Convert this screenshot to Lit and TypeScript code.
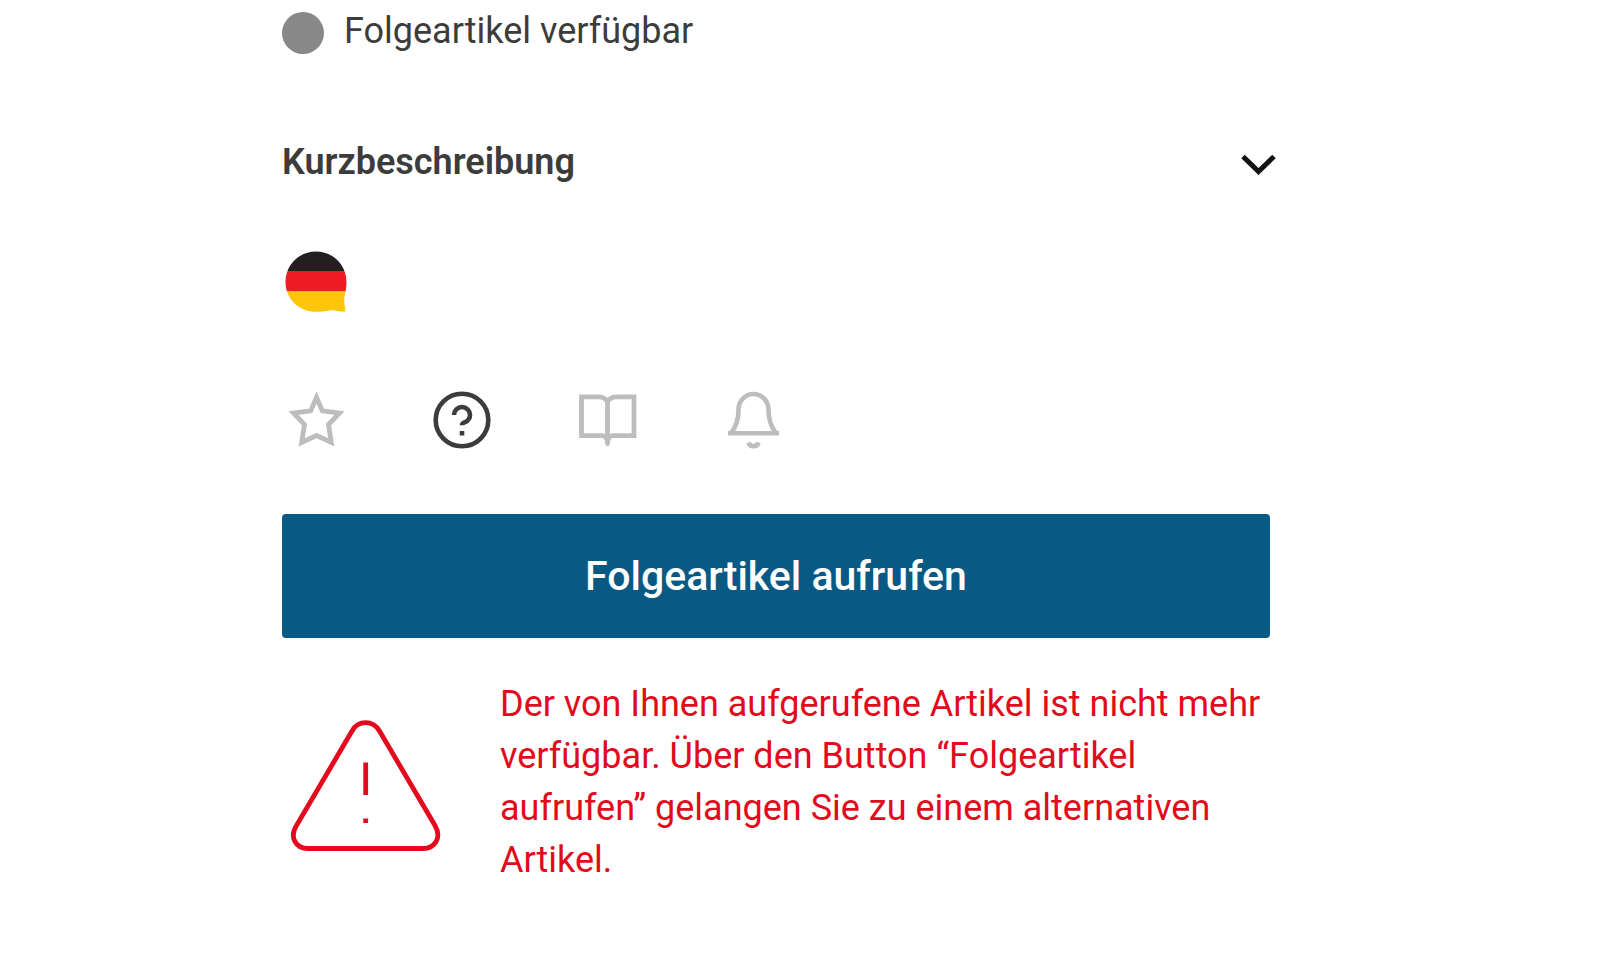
import { LitElement, html, css } from "lit";
import { customElement, state } from "lit/decorators.js";

@customElement("app-root")
export class AppRoot extends LitElement {
  @state() private open = false;

  static styles = css`
    :host {
      display: grid;
      grid-template-columns: 282fr 988fr 330fr;
      min-height: 100vh;
      background: #fff;
      color: #3c3c3b;
      font-family: Roboto, "Liberation Sans", sans-serif;
      font-size: 36px;
      line-height: 52px;
    }
    * {
      box-sizing: border-box;
    }
    svg {
      display: block;
      flex: none;
    }
    button {
      font: inherit;
      color: inherit;
      background: none;
      border: 0;
      padding: 0;
      margin: 0;
      cursor: pointer;
    }
    .article {
      grid-column: 2;
      min-width: 0;
      padding-top: 5px;
    }
    .availability {
      display: flex;
      gap: 20px;
      align-items: center;
      margin: 0;
    }
    .dot {
      flex: none;
      width: 42px;
      height: 42px;
      margin-top: 4px;
      border-radius: 50%;
      background: #888;
    }
    .heading {
      margin: 79px -6px 0 0;
      font-size: inherit;
      font-weight: 600;
    }
    .toggle {
      display: flex;
      justify-content: space-between;
      align-items: center;
      width: 100%;
      text-align: left;
    }
    .chevron {
      margin-top: 6px;
    }
    .language {
      display: block;
      margin-top: 60px;
    }
    .actions {
      display: flex;
      gap: 78px;
      margin-top: 70px;
    }
    .action {
      color: #bdbdbd;
    }
    .action.active {
      color: #3c3c3b;
    }
    .primary {
      display: block;
      width: 100%;
      margin-top: 60px;
      padding: 36px 20px;
      border-radius: 4px;
      background: #085a84;
      color: #fff;
      font-size: 41px;
      font-weight: 500;
    }
    .notice {
      display: flex;
      align-items: center;
      gap: 50px;
      margin-top: 40px;
      color: #e20a1c;
    }
    .notice p {
      margin: 0;
    }
  `;

  render() {
    return html`
      <main class="article">
        <p class="availability"><span class="dot"></span>Folgeartikel verfügbar</p>

        <h2 class="heading">
          <button
            class="toggle"
            aria-expanded=${this.open ? "true" : "false"}
            @click=${() => (this.open = !this.open)}
          >
            Kurzbeschreibung
            <svg class="chevron" width="36" height="24" viewBox="0 0 36 24" fill="none" stroke="#111" stroke-width="5" aria-hidden="true">
              <path d="M3 3.500 18.500 18.500 34 3.500" />
            </svg>
          </button>
        </h2>

        <button class="language" aria-label="Deutsch">
          <svg width="68" height="68" viewBox="0 0 68 68" aria-hidden="true">
            <defs>
              <clipPath id="bubble">
                <path d="M34 3.500C51 3.500 64.500 17 64.500 34C64.500 41 62.800 46 62.300 50C62.300 55 62.800 59 63.500 63.500C59 63.800 54 62.800 50 62C45 63 40 63.800 34 63.800C17 63.800 3.500 51 3.500 34C3.500 17 17 3.500 34 3.500Z" />
              </clipPath>
            </defs>
            <g clip-path="url(#bubble)">
              <path fill="#231f20" d="M0 0H68V23H0Z" />
              <path fill="#ed1c24" d="M0 23H68V43.500H0Z" />
              <path fill="#fdc60b" d="M0 43.500H68V68H0Z" />
            </g>
          </svg>
        </button>

        <div class="actions">
          <button class="action" aria-label="Merken">
            <svg width="68" height="68" viewBox="0 0 68 68" fill="none" stroke="currentColor" stroke-width="4.800" aria-hidden="true">
              <path d="M34.500 11.500 40.300 24.800 57.500 27 46.500 38.500 49.300 56.500 34.500 49.500 19.700 56.500 22.500 38.500 11.500 27 28.700 24.800Z" />
            </svg>
          </button>
          <button class="action active" aria-label="Frage stellen">
            <svg width="68" height="68" viewBox="0 0 68 68" fill="none" stroke="currentColor" stroke-width="4.600" aria-hidden="true">
              <circle cx="34" cy="34" r="26.300" />
              <path d="M26 29A8 8 0 0 1 42 29C42 33 39.500 35 37 36.200C35 37 34 37.500 34 39.300M34 45V49.600" />
            </svg>
          </button>
          <button class="action" aria-label="Katalog">
            <svg width="68" height="68" viewBox="0 0 68 68" fill="none" stroke="currentColor" stroke-width="4.800" aria-hidden="true">
              <path d="M33.500 58V16C32 13 29 10.800 25 10.800H7.500V49.600H28C31 49.600 33 52 33.500 55C34 52 36 49.600 39 49.600H60V10.800H42C38 10.800 35 13 33.500 16" />
              <path fill="currentColor" stroke="none" d="M29 50H38C36 53 36 56 35 60H32C31 56 31 53 29 50Z" />
            </svg>
          </button>
          <button class="action" aria-label="Benachrichtigen">
            <svg width="68" height="68" viewBox="0 0 68 68" fill="none" stroke="currentColor" stroke-width="4.600" aria-hidden="true">
              <path d="M11 47.300C16 41 18.500 34 18.500 23.500A15 15.500 0 0 1 48.500 23.500C48.500 34 51 41 56 47.300M8 47.300H59M28.500 56.500C30 61.300 37 61.300 38.500 56.500" />
            </svg>
          </button>
        </div>

        <button class="primary">Folgeartikel aufrufen</button>

        <div class="notice" role="alert">
          <svg width="168" height="144" viewBox="0 0 168 144" fill="none" stroke="currentColor" stroke-width="4.800" aria-hidden="true">
            <path d="M70 21C76 9.800 91 9.800 97.500 21L153 115.500C160 127.500 153 138.500 141 138.500H26C14 138.500 7 127.500 14.500 115.500ZM83.700 52.500V85M83.700 108.500V113" />
          </svg>
          <p>
            Der von Ihnen aufgerufene Artikel ist nicht mehr verfügbar. Über den
            Button “Folgeartikel aufrufen” gelangen Sie zu einem alternativen
            Artikel.
          </p>
        </div>
      </main>
    `;
  }
}
